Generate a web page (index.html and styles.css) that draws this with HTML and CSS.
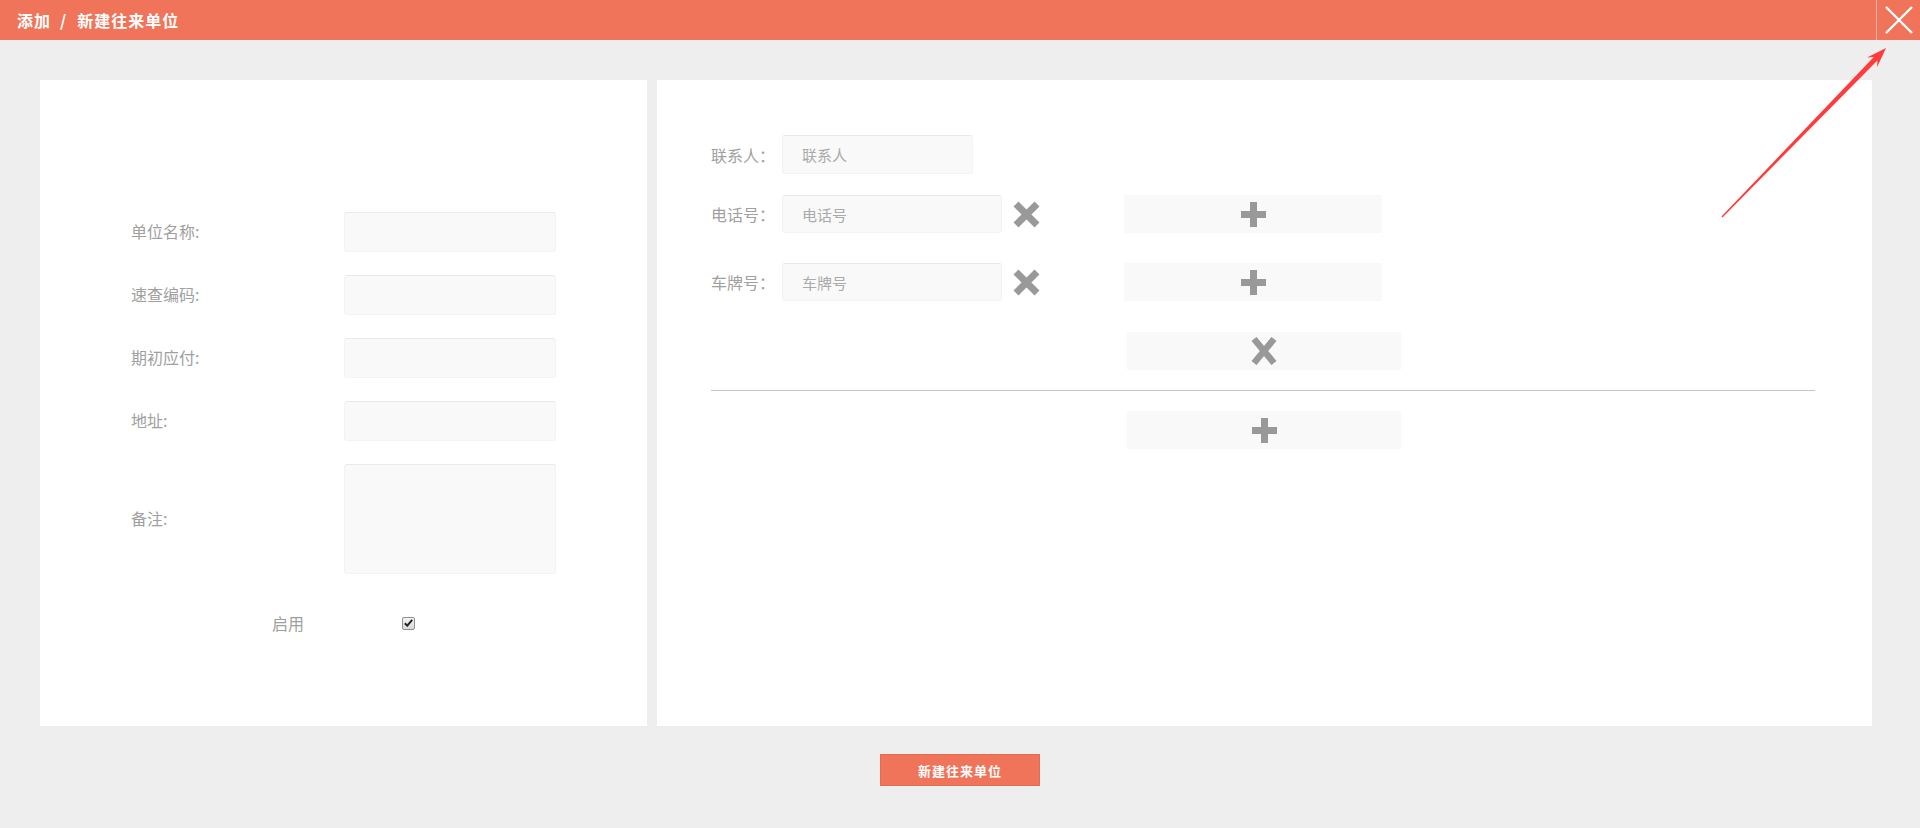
FILE: index.html
```html
<!DOCTYPE html>
<html lang="zh-CN">
<head>
<meta charset="utf-8">
<title>添加 / 新建往来单位</title>
<link rel="stylesheet" href="styles.css">
</head>
<body>
<header class="topbar">
  <h1 class="title"><span>添加</span><span class="sep">/</span><span>新建往来单位</span></h1>
  <button class="close" type="button" aria-label="关闭">
    <svg width="28" height="28" viewBox="0 0 28 28"><path d="M1 1L27 27M27 1L1 27" stroke="#fff" stroke-width="2.4" fill="none"/></svg>
  </button>
</header>

<main class="main">
  <div class="panels">
    <section class="panel panel-left">
      <div class="form-grid">
        <label class="flabel">单位名称:</label><input class="field" type="text">
        <label class="flabel">速查编码:</label><input class="field" type="text">
        <label class="flabel">期初应付:</label><input class="field" type="text">
        <label class="flabel">地址:</label><input class="field" type="text">
        <label class="flabel">备注:</label><textarea class="field area"></textarea>
      </div>
      <div class="enable-row">
        <span class="flabel">启用</span>
        <span class="check"><svg width="9" height="8" viewBox="0 0 9 8"><path d="M0.8 4.2L3.3 6.6L8.2 0.9" stroke="#222" stroke-width="2" fill="none"/></svg></span>
      </div>
    </section>

    <section class="panel panel-right">
      <div class="row row-contact">
        <label class="rlabel">联系人：</label>
        <input class="field f-contact" type="text" placeholder="联系人">
      </div>
      <div class="row row-phone">
        <label class="rlabel">电话号：</label>
        <input class="field f-wide" type="text" placeholder="电话号">
        <span class="icon-x"><svg width="27" height="27" viewBox="0 0 27 27"><path d="M3 3L24 24M24 3L3 24" stroke="#999" stroke-width="7" fill="none"/></svg></span>
        <span class="btn-box box-a"><svg width="27" height="27" viewBox="0 0 27 27"><path d="M13.5 1V26M1 13.5H26" stroke="#999" stroke-width="7" fill="none"/></svg></span>
      </div>
      <div class="row row-plate">
        <label class="rlabel">车牌号：</label>
        <input class="field f-wide" type="text" placeholder="车牌号">
        <span class="icon-x"><svg width="27" height="27" viewBox="0 0 27 27"><path d="M3 3L24 24M24 3L3 24" stroke="#999" stroke-width="7" fill="none"/></svg></span>
        <span class="btn-box box-a"><svg width="27" height="27" viewBox="0 0 27 27"><path d="M13.5 1V26M1 13.5H26" stroke="#999" stroke-width="7" fill="none"/></svg></span>
      </div>
      <div class="row row-del">
        <span class="btn-box box-b"><svg width="26" height="28" viewBox="0 0 26 28"><path d="M3 2L23 26M23 2L3 26" stroke="#999" stroke-width="6.5" fill="none"/></svg></span>
      </div>
      <hr class="divider">
      <div class="row row-add">
        <span class="btn-box box-b"><svg width="27" height="27" viewBox="0 0 27 27"><path d="M13.5 1V26M1 13.5H26" stroke="#999" stroke-width="7" fill="none"/></svg></span>
      </div>
    </section>
  </div>
  <div class="actions">
    <button class="submit" type="button">新建往来单位</button>
  </div>
</main>

<svg class="annot" width="1920" height="828" viewBox="0 0 1920 828" aria-hidden="true">
  <polygon points="1886,48 1877.1,67.3 1877.4,60.5 1722.5,217.5 1721.5,216.5 1873.8,57.1 1867.1,57.5" fill="#ff3b3b"/>
</svg>
</body>
</html>
```
FILE: styles.css
```css
* { box-sizing: border-box; }
html, body { margin: 0; padding: 0; }
body {
  width: 1920px;
  height: 828px;
  background: #eeeeee;
  font-family: "Noto Sans CJK SC", "Noto Sans", sans-serif;
  position: relative;
  overflow: hidden;
}

.topbar {
  height: 40px;
  background: #ef7459;
  display: flex;
  align-items: center;
  justify-content: space-between;
}
.title {
  margin: 0 0 0 17px;
  font-size: 16px;
  font-weight: 700;
  color: #fff;
  letter-spacing: 1px;
  line-height: 40px;
  display: flex;
}
.title .sep { margin: 0 10px 0 9px; }

.close {
  width: 44px;
  height: 40px;
  border: 0;
  border-left: 1px solid #f6b2a2;
  background: transparent;
  padding: 0;
  display: flex;
  align-items: center;
  justify-content: center;
}

.main {
  padding: 40px 48px 0 40px;
}
.panels {
  display: flex;
  gap: 10px;
  height: 646px;
}
.panel { background: #fff; }
.panel-left {
  width: 607px;
  padding: 132px 0 0 91px;
}
.panel-right {
  flex: 1;
  padding: 55px 57px 0 54px;
}

.flabel, .rlabel {
  color: #a0a0a0;
  font-size: 16px;
}
.form-grid {
  display: grid;
  grid-template-columns: 213px 212px;
  grid-template-rows: 40px 40px 40px 40px 110px;
  row-gap: 23px;
  align-items: center;
}
.form-grid .area { height: 110px; }
.form-grid .flabel { margin-top: -3px; }

.field {
  display: block;
  margin: 0;
  width: 212px;
  height: 40px;
  background: #f9f9f9;
  border: 1px solid #f3f3f3;
  border-top-color: #e9e9e9;
  border-radius: 3px;
  font-family: inherit;
  font-size: 15px;
  color: #666;
  padding: 0 19px;
  outline: none;
  resize: none;
}
.field::placeholder { color: #aaa; }

.enable-row {
  margin: 37px 0 0 -91px;
  display: flex;
  justify-content: center;
  align-items: center;
  gap: 98px;
}
.check {
  width: 13px;
  height: 13px;
  border: 1px solid #8f8f8f;
  border-radius: 2px;
  background: linear-gradient(#f4f4f4, #d9d9d9);
  display: flex;
  align-items: center;
  justify-content: center;
}

.row {
  display: flex;
  align-items: center;
}
.rlabel { width: 71px; }
.row-contact { height: 39px; }
.f-contact { width: 191px; height: 39px; }
.row-phone { margin-top: 21px; height: 38px; }
.row-plate { margin-top: 30px; height: 38px; }
.f-wide { width: 220px; height: 38px; }
.icon-x { margin-left: 11px; display: flex; }

.btn-box {
  height: 38px;
  background: #f9f9f9;
  display: flex;
  align-items: center;
  justify-content: center;
}
.box-a { width: 258px; margin-left: 84px; }
.box-b { width: 274px; margin-left: 416px; }
.row-del { margin-top: 31px; }
.divider {
  margin: 20px 0 0 0;
  border: 0;
  height: 1px;
  background: #c4c4c4;
}
.row-add { margin-top: 20px; }

.actions {
  display: flex;
  justify-content: center;
  padding-top: 28px;
  padding-left: 8px;
}
.submit {
  width: 160px;
  height: 32px;
  background: #ef7459;
  border: 1px solid #e8694e;
  color: #fff;
  font-family: inherit;
  font-size: 13px;
  font-weight: 700;
  letter-spacing: 1px;
  padding: 0;
}

.annot {
  position: absolute;
  left: 0;
  top: 0;
  pointer-events: none;
}
```
